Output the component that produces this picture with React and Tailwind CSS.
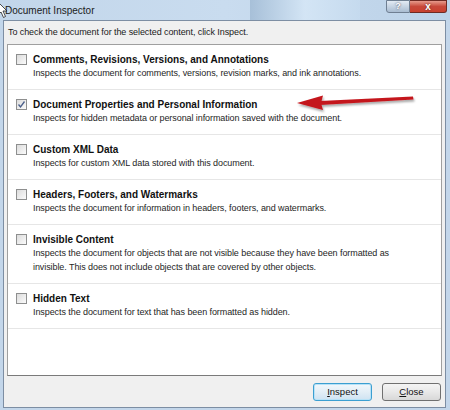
import React from "react";

const items = [
  { title: "Comments, Revisions, Versions, and Annotations", desc: ["Inspects the document for comments, versions, revision marks, and ink annotations."], checked: false },
  { title: "Document Properties and Personal Information", desc: ["Inspects for hidden metadata or personal information saved with the document."], checked: true },
  { title: "Custom XML Data", desc: ["Inspects for custom XML data stored with this document."], checked: false },
  { title: "Headers, Footers, and Watermarks", desc: ["Inspects the document for information in headers, footers, and watermarks."], checked: false },
  { title: "Invisible Content", desc: ["Inspects the document for objects that are not visible because they have been formatted as", "invisible. This does not include objects that are covered by other objects."], checked: false },
  { title: "Hidden Text", desc: ["Inspects the document for text that has been formatted as hidden."], checked: false },
];

function Checkbox({ checked }) {
  return (
    <div className="w-[11px] h-[11px] mt-[1px] shrink-0 border border-[#8e8f8f] bg-gradient-to-br from-[#dcdcdc] to-[#fbfbfb] flex items-center justify-center">
      {checked && (
        <svg width="9" height="9" viewBox="0 0 9 9">
          <path d="M1.5 4.5 L3.5 7 L7.5 1.5" fill="none" stroke="#4a5f8a" strokeWidth="1.3" />
        </svg>
      )}
    </div>
  );
}

function Item({ item }) {
  return (
    <div className="flex gap-[6px] pl-[8px] pt-[8px] pb-[8.5px] border-b border-[#e6e6e6]">
      <Checkbox checked={item.checked} />
      <div className="flex flex-col">
        <div className="font-bold text-[10px] leading-[13px] text-[#111]">{item.title}</div>
        <div className="mt-[1px] text-[9px] leading-[13.5px] text-[#1e1e1e] tracking-[-0.08px]">
          {item.desc.map((d, i) => (
            <div key={i}>{d}</div>
          ))}
        </div>
      </div>
    </div>
  );
}

export default function App() {
  return (
    <div className="relative w-[450px] h-[410px] overflow-hidden bg-[#c3d6ea]" style={{ fontFamily: "'Liberation Sans', Arial, sans-serif" }}>
      {/* Title bar */}
      <div className="h-[20px] relative bg-gradient-to-r from-[#c2d6ea] via-[#c9dcef] to-[#bcd2e8] flex items-center">
        <div className="absolute left-[250px] top-0 h-[20px] w-[110px] bg-gradient-to-r from-[#9fb9d3] via-[#d7e8f7] to-[#c6dbef] opacity-80" />
        <span className="relative pl-[5px] text-[10px] text-[#1b1b1b]">Document Inspector</span>
        <div className="absolute right-[3px] top-0 flex">
          <div className="w-[24px] h-[13px] rounded-bl-[3px] border border-[#6f7f92] bg-gradient-to-b from-[#e3ebf4] to-[#a9bcd1] flex items-center justify-center text-[9px] font-bold text-white leading-none" style={{ textShadow: "0 0 2px #334" }}>?</div>
          <div className="w-[37px] h-[13px] rounded-br-[3px] border border-l-0 border-[#6e2a23] bg-gradient-to-b from-[#e69a8c] via-[#c8483a] to-[#c9412f] flex items-center justify-center text-[10px] font-bold text-white leading-none" style={{ textShadow: "0 0 2px #522" }}>x</div>
        </div>
      </div>

      {/* Body */}
      <div className="ml-[3px] mr-[4px] h-[388px] border border-[#7d8ea3] bg-[#f0f0f0] flex flex-col px-[3px]">
        <div className="h-[23px] flex items-center pl-[1px] text-[9px] text-[#1a1a1a] tracking-[-0.08px]">To check the document for the selected content, click Inspect.</div>
        <div className="h-[332px] bg-white border border-[#9f9f9f] border-b-[#7a7a7a] flex flex-col">
          {items.map((it, i) => (
            <Item key={i} item={it} />
          ))}
        </div>
        <div className="flex justify-end gap-[10px] pt-[7px] pr-[1px]">
          <button className="w-[59px] h-[18px] rounded-[3px] border border-[#3c9fd1] bg-gradient-to-b from-[#f2f8fc] via-[#e3eef6] to-[#cfe3f2] text-[9.5px] text-[#111] leading-none" style={{ boxShadow: "inset 0 0 0 1px #b8e2f7" }}>
            <span className="underline">I</span>nspect
          </button>
          <button className="w-[59px] h-[18px] rounded-[3px] border border-[#707070] bg-gradient-to-b from-[#f4f4f4] via-[#e8e8e8] to-[#d8d8d8] text-[9.5px] text-[#111] leading-none">
            <span className="underline">C</span>lose
          </button>
        </div>
      </div>

      {/* Red arrow annotation */}
      <svg className="absolute left-[290px] top-[88px]" width="130" height="30" viewBox="0 0 130 30">
        <defs>
          <filter id="sh" x="-10%" y="-50%" width="120%" height="200%">
            <feDropShadow dx="1" dy="2" stdDeviation="1.2" floodColor="#000" floodOpacity="0.35" />
          </filter>
        </defs>
        <g filter="url(#sh)">
          <path d="M30 13 L123 8.5 L123.5 11.5 L30 17 Z" fill="#c4151c" />
          <path d="M7 15 L33 7.5 L31 15 L33 22 Z" fill="#c4151c" />
        </g>
      </svg>

      {/* Mouse cursor */}
      <svg className="absolute left-[-3px] top-[1px]" width="12" height="18" viewBox="0 0 12 18">
        <path d="M1 1 L1 14 L4 11 L6.5 16.5 L8.5 15.5 L6 10 L10 10 Z" fill="#fff" stroke="#222" strokeWidth="0.8" />
      </svg>
    </div>
  );
}
